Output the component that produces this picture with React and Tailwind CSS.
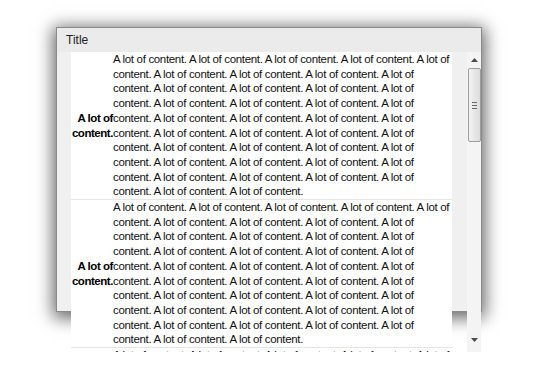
import React from "react"

const phrase = "A lot of content."
const body = Array(39).fill(phrase).join(" ")

const Row = () => (
  <div className="flex border-b border-[#e6e6e6]">
    <div className="w-[42px] shrink-0 flex items-center justify-end text-right font-bold text-black leading-[14.7px] tracking-[-0.45px]">
      <span className="whitespace-pre-line">{"A lot of\ncontent."}</span>
    </div>
    <div className="w-[339px] text-[#111] leading-[14.7px] tracking-[-0.33px]">{body}</div>
  </div>
)

const Scrollbar = () => (
  <div className="w-[14px] h-[300px] shrink-0 bg-[#f4f4f4] flex flex-col items-center">
    <div className="h-[16px] flex items-center justify-center">
      <svg width="7" height="4" viewBox="0 0 7 4"><path d="M0 4 L3.5 0 L7 4 Z" fill="#4a4a4a" /></svg>
    </div>
    <div className="w-[13px] h-[74px] rounded-[2px] border border-[#9c9c9c] bg-gradient-to-r from-[#f2f2f2] to-[#dcdcdc] flex flex-col items-center justify-center gap-[2px]">
      <div className="w-[5px] h-px bg-[#666]" />
      <div className="w-[5px] h-px bg-[#666]" />
      <div className="w-[5px] h-px bg-[#666]" />
    </div>
    <div className="flex-1" />
    <div className="h-[20px] flex items-center justify-center pb-[4px]">
      <svg width="7" height="4" viewBox="0 0 7 4"><path d="M0 0 L7 0 L3.5 4 Z" fill="#4a4a4a" /></svg>
    </div>
  </div>
)

export default function App() {
  return (
    <div className="w-[540px] h-[381px] bg-white overflow-hidden pt-[27px] pl-[56px]" style={{ fontFamily: '"Liberation Sans", Arial, sans-serif' }}>
      <div className="w-[426px] h-[285px] border border-[#8a8a8a] bg-[#f0f0f0] shadow-[0_3px_16px_3px_rgba(0,0,0,0.6)] text-[12px]">
        <div className="h-[24px] bg-[#ebebeb] flex items-center pl-[9px] text-[#222]">Title</div>
        <div className="flex pl-[14px] gap-[15px]">
          <div className="w-[381px] h-[300px] shrink-0 overflow-hidden bg-white text-[11.5px]">
            <Row />
            <Row />
            <Row />
          </div>
          <Scrollbar />
        </div>
      </div>
    </div>
  )
}
